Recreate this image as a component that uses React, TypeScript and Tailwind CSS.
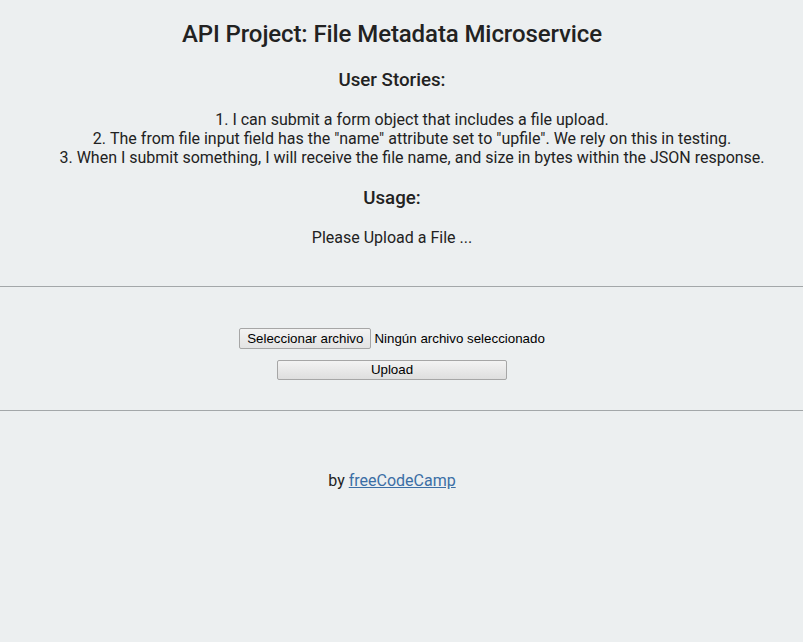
import React from "react";

const STORIES = [
  "I can submit a form object that includes a file upload.",
  'The from file input field has the "name" attribute set to "upfile". We rely on this in testing.',
  "When I submit something, I will receive the file name, and size in bytes within the JSON response.",
];

export default function App(): React.ReactElement {
  return (
    <div className="min-h-[642px] bg-[#ECEFF0] text-center text-[16px] text-[#222] font-['Roboto',sans-serif]">
      <div className="pr-[19px] pt-[20px]">
        <h2 className="text-[24px] leading-[28px] font-medium tracking-[-0.1px]">API Project: File Metadata Microservice</h2>
        <h3 className="mt-[21px] text-[18.72px] leading-[22px] font-medium">User Stories:</h3>
        <ol className="mt-[19px] list-decimal list-inside pl-[40px] leading-[19px]">
          {STORIES.map((s) => (
            <li key={s}>{s}</li>
          ))}
        </ol>
        <h3 className="mt-[20px] text-[18.72px] leading-[22px] font-medium">Usage:</h3>
        <p className="mt-[19px] leading-[19px]">Please Upload a File ...</p>
      </div>

      <hr className="mt-[39px] border-t border-[#a3a7a9]" />

      <form className="pr-[19px] pt-[41px] pb-[30px] flex flex-col items-center font-['Liberation_Sans',Arial,sans-serif] text-[13.33px] text-black">
        <div className="flex items-center h-[21px]">
          <button
            type="button"
            className="h-[21px] px-[7px] border border-[#a6a6a6] rounded-[2px] bg-gradient-to-b from-[#f3f3f3] to-[#e3e3e3] leading-[19px]"
          >
            Seleccionar archivo
          </button>
          <span className="ml-[3px]">Ningún archivo seleccionado</span>
        </div>
        <button
          type="submit"
          className="mt-[11px] w-[230px] h-[20px] border border-[#a6a6a6] rounded-[2px] bg-gradient-to-b from-[#f3f3f3] to-[#dedede] leading-[18px]"
        >
          Upload
        </button>
      </form>

      <hr className="border-t border-[#a3a7a9]" />

      <div className="pr-[19px] pt-[60px]">
        <p className="leading-[19px]">
          by{" "}
          <a href="#" className="text-[#3b6ea5] underline">
            freeCodeCamp
          </a>
        </p>
      </div>
    </div>
  );
}
